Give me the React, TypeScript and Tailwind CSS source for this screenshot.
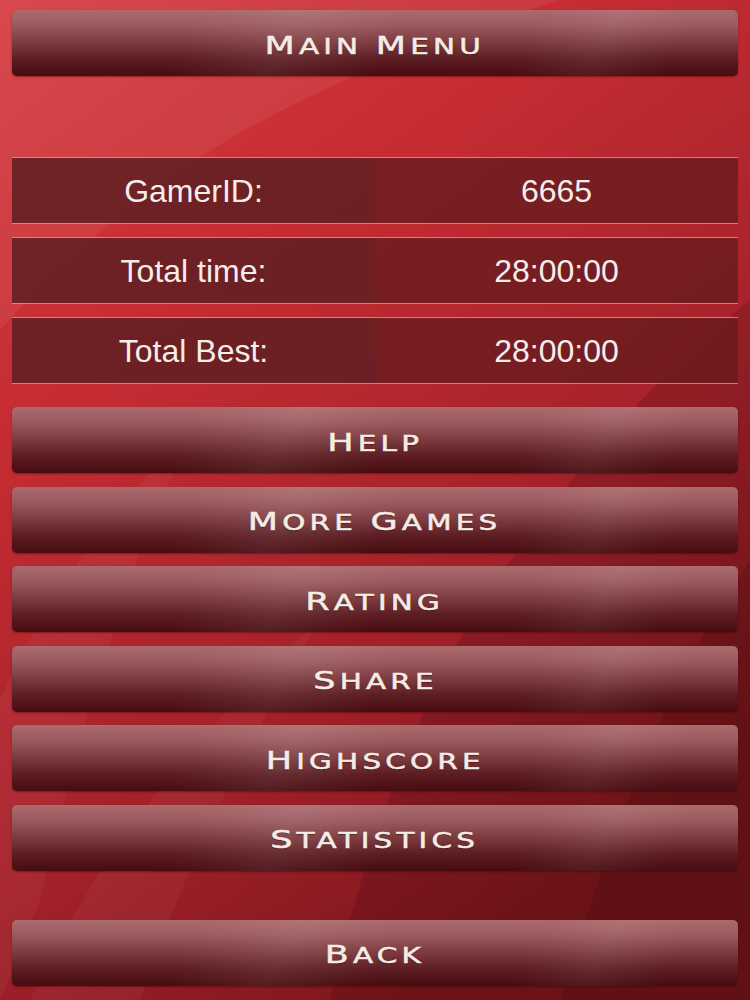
import React from "react";

function Label({ text }: { text: string }) {
  const words = text.split(" ");
  return (
    <span className="inline-block translate-y-[2px] scale-x-[1.4] font-['DejaVu_Sans',sans-serif] tracking-[3px] text-[#f5ece6] [-webkit-text-stroke:0.5px_#f5ece6] [text-shadow:0_1px_1px_rgba(40,0,0,0.5)] leading-none whitespace-nowrap">
      {words.map((w, i) => (
        <React.Fragment key={i}>
          {i > 0 ? <span className="text-[21px]"> </span> : null}
          <span className="text-[25px]">{w[0]}</span>
          <span className="text-[21px] uppercase">{w.slice(1)}</span>
        </React.Fragment>
      ))}
    </span>
  );
}

function Btn({ text }: { text: string }) {
  return (
    <div className="h-[66px] mx-3 rounded-[5px] flex items-center justify-center bg-[linear-gradient(118deg,rgba(255,255,255,0)_25%,rgba(255,255,255,0.07)_38%,rgba(255,255,255,0)_52%,rgba(255,255,255,0)_70%,rgba(255,255,255,0.06)_80%,rgba(255,255,255,0)_90%),linear-gradient(to_bottom,#ab6a6d_0%,#9c5b5f_22%,#7b3a3e_50%,#5c1d22_75%,#470c10_100%)] shadow-[0_1px_2px_rgba(60,0,0,0.45)]">
      <Label text={text} />
    </div>
  );
}

function Row({ label, value }: { label: string; value: string }) {
  return (
    <div className="h-[67px] mx-3 flex border-y-[1.5px] border-[#e0a2a2]/70 font-['Liberation_Sans',Arial,sans-serif] text-[32px] text-[#f6eeea]">
      <div className="w-[363px] flex items-center justify-center bg-[#5e1f22]/85">{label}</div>
      <div className="flex-1 flex items-center justify-center bg-[#661c1f]/80">{value}</div>
    </div>
  );
}

export default function App() {
  return (
    <div className="relative w-[750px] h-[1000px] overflow-hidden bg-[#b82a30]">
      <svg className="absolute inset-0" width="750" height="1000" viewBox="0 0 750 1000">
        <defs>
          <linearGradient id="base" x1="0" y1="0" x2="0.55" y2="1">
            <stop offset="0" stopColor="#d63d42" />
            <stop offset="0.35" stopColor="#c42c32" />
            <stop offset="0.7" stopColor="#a4212a" />
            <stop offset="1" stopColor="#7c161c" />
          </linearGradient>
        </defs>
        <rect width="750" height="1000" fill="url(#base)" />
        <path d="M0 0 L560 0 Q 330 70 180 170 Q 80 240 0 330 Z" fill="#ffffff" opacity="0.06" />
        <path d="M750 300 Q 600 420 470 620 Q 380 780 330 1000 L750 1000 Z" fill="#000000" opacity="0.12" />
        <path d="M750 560 Q 650 700 560 1000 L750 1000 Z" fill="#000000" opacity="0.1" />
        <path d="M0 700 Q 60 560 200 420 Q 120 560 40 900 L0 1000 Z" fill="#ffffff" opacity="0.04" />
        <path d="M30 1000 Q 120 800 320 620 Q 200 820 140 1000 Z" fill="#ffffff" opacity="0.04" />
      </svg>
      <div className="relative flex flex-col pt-[10px]">
        <Btn text="Main Menu" />
        <div className="mt-[81px] flex flex-col gap-[13px]">
          <Row label="GamerID:" value="6665" />
          <Row label="Total time:" value="28:00:00" />
          <Row label="Total Best:" value="28:00:00" />
        </div>
        <div className="mt-[23px] flex flex-col gap-[13.6px]">
          <Btn text="Help" />
          <Btn text="More Games" />
          <Btn text="Rating" />
          <Btn text="Share" />
          <Btn text="Highscore" />
          <Btn text="Statistics" />
        </div>
        <div className="mt-[49px]">
          <Btn text="Back" />
        </div>
      </div>
    </div>
  );
}
